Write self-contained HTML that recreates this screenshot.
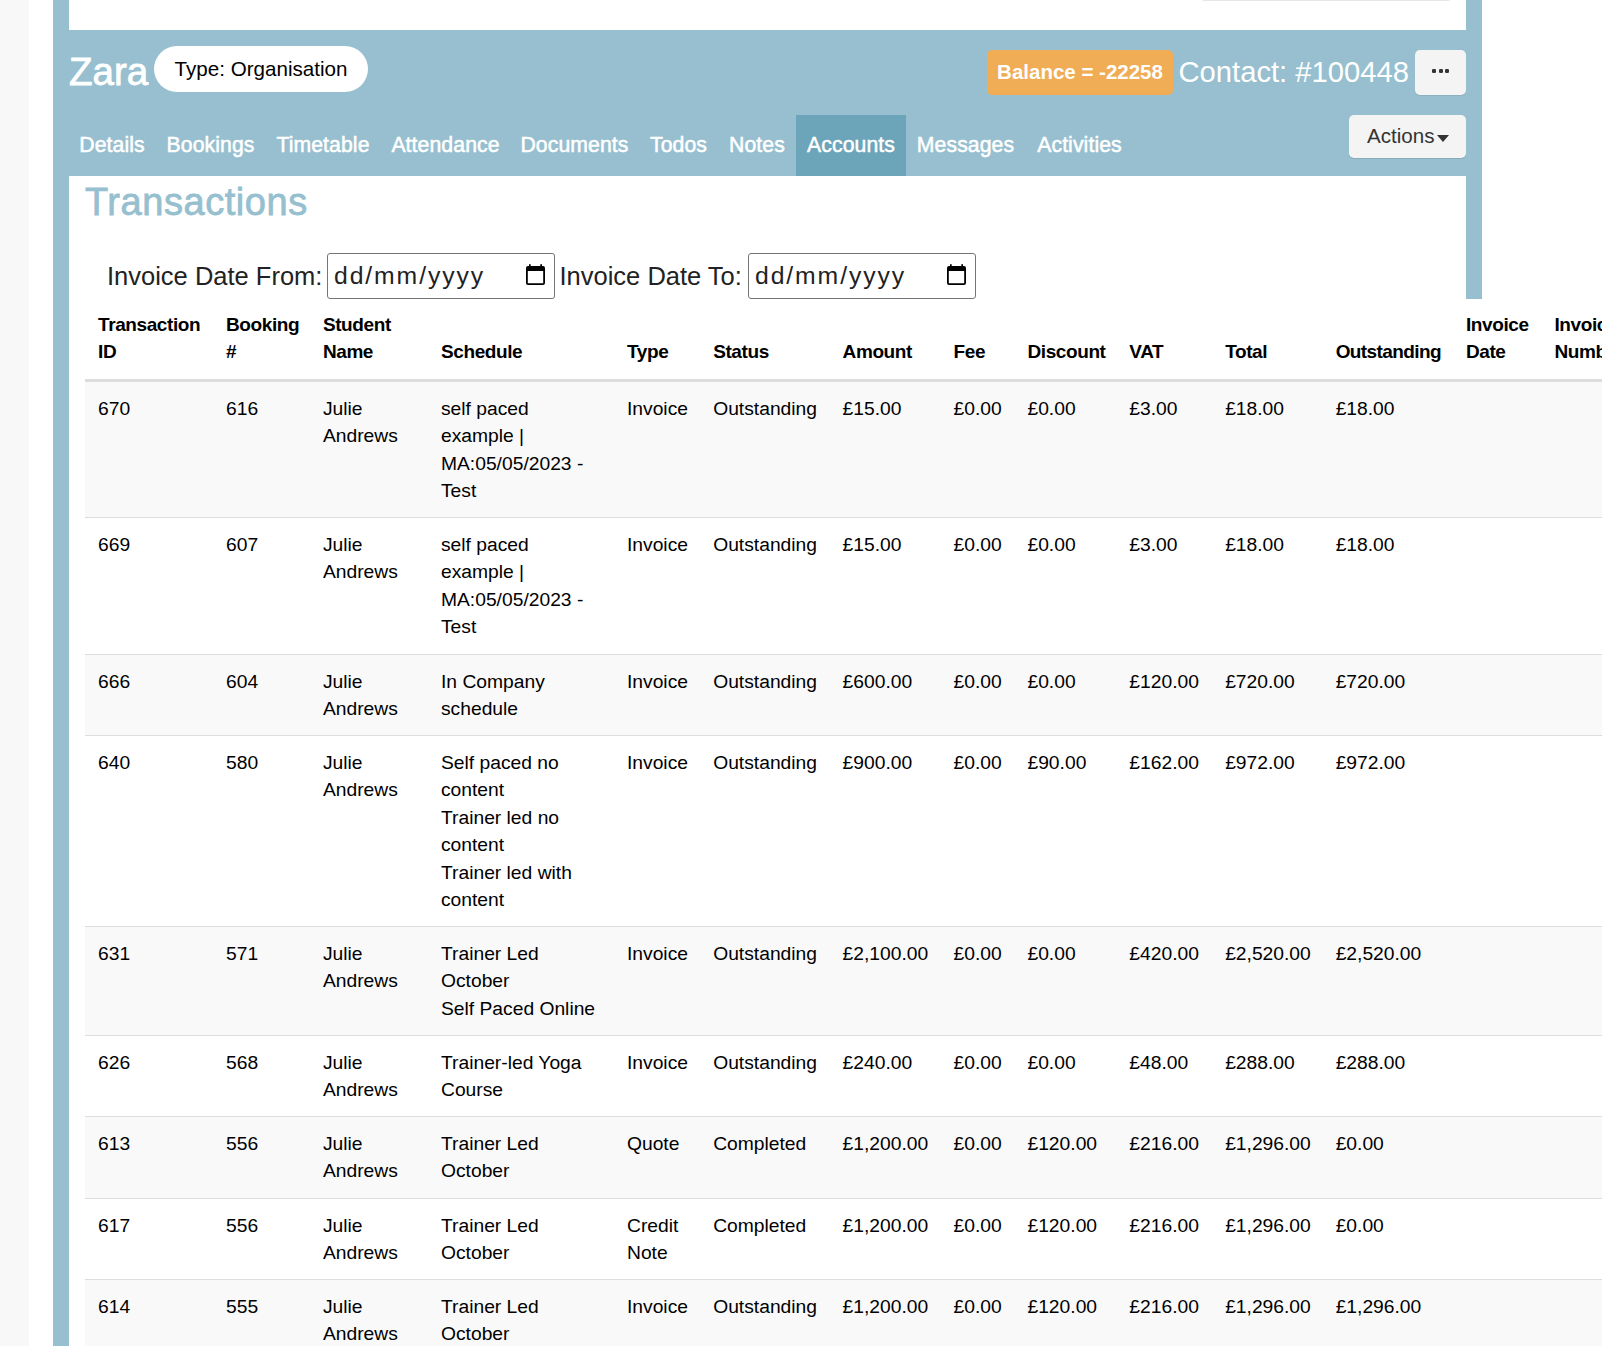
<!DOCTYPE html>
<html><head><meta charset="utf-8">
<style>
html,body{margin:0;padding:0;width:1602px;height:1346px;overflow:hidden;background:#fff;font-family:"Liberation Sans",sans-serif;}
.abs{position:absolute;}
#lg{left:0;top:0;width:29px;height:1346px;background:#f8f8f8;}
#bb{left:53px;top:0;width:1429px;height:1346px;background:#97bfcf;}
#tw{left:69px;top:0;width:1397px;height:30px;background:#fff;}
#topel{left:1200px;top:-20px;width:252px;height:21px;border:1px solid #e6e6e6;border-radius:4px;box-sizing:border-box;}
#zara{left:69px;top:49.5px;font-size:38.5px;line-height:44px;color:#fff;-webkit-text-stroke:0.8px #fff;}
#pill{left:154px;top:46px;width:214px;height:46px;border-radius:23px;background:#fff;color:#000;font-size:20.6px;line-height:46px;text-align:center;}
#badge{left:987px;top:50px;width:186px;height:45px;border-radius:5px;background:#f0ad55;color:#fff;font-weight:bold;font-size:20.5px;line-height:43px;text-align:center;}
#contact{left:1178.5px;top:51.5px;font-size:29.2px;line-height:40px;color:#fff;white-space:nowrap;}
#dots{left:1415px;top:50px;width:51px;height:45px;border-radius:5px;background:#f4f4f4;box-shadow:0 1px 0 rgba(0,0,0,0.08);}
#dots i{position:absolute;top:19px;width:4px;height:4px;background:#333;border-radius:1.3px;}
#nav{left:69px;top:115px;height:61px;}
.tab{position:absolute;top:0;height:61px;line-height:59px;color:#fff;font-size:21.2px;letter-spacing:0.1px;text-align:center;white-space:nowrap;-webkit-text-stroke:0.5px #fff;}
.tab.act{background:#6ca5b9;height:62px;}
#actions{left:1349px;top:115px;width:117px;height:43px;border-radius:5px;background:#f4f4f4;box-shadow:0 1px 0 rgba(0,0,0,0.10);color:#333;font-size:20.6px;line-height:43px;}
#content{left:69px;top:176px;width:1397px;height:1170px;background:#fff;}
#title{left:85px;top:179px;font-size:38px;letter-spacing:0.55px;line-height:46px;color:#96bfcf;white-space:nowrap;-webkit-text-stroke:0.8px #96bfcf;}
.lbl{top:258px;font-size:25.5px;line-height:36px;color:#222;white-space:nowrap;}
.inp{top:253px;width:228px;height:45.6px;border:1.4px solid #767676;border-radius:3px;z-index:2;box-sizing:border-box;background:#fff;}
.inp span{position:absolute;left:6px;top:5px;font-size:24.75px;line-height:34px;color:#222;letter-spacing:1.9px;}
.inp svg{position:absolute;left:197.6px;top:9.5px;}
table{position:absolute;left:85px;top:298px;border-collapse:collapse;table-layout:fixed;background:#fff;color:#000;}
th,td{padding:0 0 0 13px;text-align:left;vertical-align:top;white-space:nowrap;font-size:19.25px;line-height:27.5px;}
th{font-weight:bold;vertical-align:bottom;padding-bottom:13px;font-size:19px;letter-spacing:-0.4px;}
td{padding-top:13px;}
thead tr{height:82px;border-bottom:3px solid #ddd;}
tbody tr{border-top:1px solid #ddd;}
tbody tr:first-child{border-top:0;}
tbody tr.g{background:#f9f9f9;}
</style></head>
<body>
<div id="lg" class="abs"></div>
<div id="bb" class="abs"></div>
<div id="tw" class="abs"></div>
<div id="topel" class="abs"></div>
<div id="zara" class="abs">Zara</div>
<div id="pill" class="abs">Type: Organisation</div>
<div id="badge" class="abs">Balance = -22258</div>
<div id="contact" class="abs">Contact: #100448</div>
<div id="dots" class="abs"><i style="left:17px"></i><i style="left:23.5px"></i><i style="left:30px"></i></div>
<div id="nav" class="abs">
<div class="tab" style="left:0;width:86px">Details</div>
<div class="tab" style="left:87px;width:109px">Bookings</div>
<div class="tab" style="left:196px;width:116px">Timetable</div>
<div class="tab" style="left:312px;width:129px">Attendance</div>
<div class="tab" style="left:441px;width:129px">Documents</div>
<div class="tab" style="left:570px;width:79px">Todos</div>
<div class="tab" style="left:649px;width:78px">Notes</div>
<div class="tab act" style="left:727px;width:110px">Accounts</div>
<div class="tab" style="left:837px;width:119px">Messages</div>
<div class="tab" style="left:956px;width:109px">Activities</div>
</div>
<div id="actions" class="abs"><span style="position:absolute;left:18px;top:-1px">Actions</span><svg style="position:absolute;left:88px;top:20px" width="12" height="7" viewBox="0 0 12 7"><path d="M0 0H12L6 7Z" fill="#333"/></svg></div>
<div id="content" class="abs"></div>
<div class="abs" style="left:1466px;top:297px;width:16px;height:2px;background:#97bfcf;z-index:3"></div>
<div id="title" class="abs">Transactions</div>
<div class="abs lbl" style="left:107px">Invoice Date From:</div>
<div class="abs inp" style="left:327px"><span>dd/mm/yyyy</span><svg width="20" height="22" viewBox="0 0 20 22"><rect x="3" y="0" width="1.7" height="3.5" rx="0.8" fill="#000"/><rect x="14.3" y="0" width="1.7" height="3.5" rx="0.8" fill="#000"/><path d="M2 2H17A2 2 0 0 1 19 4V19A2 2 0 0 1 17 21H2A2 2 0 0 1 0 19V4A2 2 0 0 1 2 2ZM1.8 7V19.2H17.2V7Z" fill="#000" fill-rule="evenodd"/></svg></div>
<div class="abs lbl" style="left:559.5px">Invoice Date To:</div>
<div class="abs inp" style="left:748px"><span>dd/mm/yyyy</span><svg width="20" height="22" viewBox="0 0 20 22"><rect x="3" y="0" width="1.7" height="3.5" rx="0.8" fill="#000"/><rect x="14.3" y="0" width="1.7" height="3.5" rx="0.8" fill="#000"/><path d="M2 2H17A2 2 0 0 1 19 4V19A2 2 0 0 1 17 21H2A2 2 0 0 1 0 19V4A2 2 0 0 1 2 2ZM1.8 7V19.2H17.2V7Z" fill="#000" fill-rule="evenodd"/></svg></div>
<table style="width:1656.50px">
<colgroup><col style="width:128px"><col style="width:96.9px"><col style="width:118.1px"><col style="width:186px"><col style="width:86.2px"><col style="width:129.4px"><col style="width:111.0px"><col style="width:73.9px"><col style="width:101.9px"><col style="width:95.8px"><col style="width:110.5px"><col style="width:130.3px"><col style="width:88.5px"><col style="width:200.0px"></colgroup>
<thead><tr><th>Transaction<br>ID</th><th>Booking<br>#</th><th>Student<br>Name</th><th>Schedule</th><th>Type</th><th>Status</th><th>Amount</th><th>Fee</th><th>Discount</th><th>VAT</th><th>Total</th><th style="letter-spacing:-0.6px">Outstanding</th><th>Invoice<br>Date</th><th>Invoice<br>Number</th></tr></thead>
<tbody>
<tr class="g" style="height:137px"><td>670</td><td>616</td><td>Julie<br>Andrews</td><td>self paced<br>example |<br>MA:05/05/2023 -<br>Test</td><td>Invoice</td><td>Outstanding</td><td>£15.00</td><td>£0.00</td><td>£0.00</td><td>£3.00</td><td>£18.00</td><td>£18.00</td><td></td><td></td></tr>
<tr style="height:137px"><td>669</td><td>607</td><td>Julie<br>Andrews</td><td>self paced<br>example |<br>MA:05/05/2023 -<br>Test</td><td>Invoice</td><td>Outstanding</td><td>£15.00</td><td>£0.00</td><td>£0.00</td><td>£3.00</td><td>£18.00</td><td>£18.00</td><td></td><td></td></tr>
<tr class="g" style="height:81px"><td>666</td><td>604</td><td>Julie<br>Andrews</td><td>In Company<br>schedule</td><td>Invoice</td><td>Outstanding</td><td>£600.00</td><td>£0.00</td><td>£0.00</td><td>£120.00</td><td>£720.00</td><td>£720.00</td><td></td><td></td></tr>
<tr style="height:191px"><td>640</td><td>580</td><td>Julie<br>Andrews</td><td>Self paced no<br>content<br>Trainer led no<br>content<br>Trainer led with<br>content</td><td>Invoice</td><td>Outstanding</td><td>£900.00</td><td>£0.00</td><td>£90.00</td><td>£162.00</td><td>£972.00</td><td>£972.00</td><td></td><td></td></tr>
<tr class="g" style="height:109px"><td>631</td><td>571</td><td>Julie<br>Andrews</td><td>Trainer Led<br>October<br>Self Paced Online</td><td>Invoice</td><td>Outstanding</td><td>£2,100.00</td><td>£0.00</td><td>£0.00</td><td>£420.00</td><td>£2,520.00</td><td>£2,520.00</td><td></td><td></td></tr>
<tr style="height:81px"><td>626</td><td>568</td><td>Julie<br>Andrews</td><td>Trainer-led Yoga<br>Course</td><td>Invoice</td><td>Outstanding</td><td>£240.00</td><td>£0.00</td><td>£0.00</td><td>£48.00</td><td>£288.00</td><td>£288.00</td><td></td><td></td></tr>
<tr class="g" style="height:82px"><td>613</td><td>556</td><td>Julie<br>Andrews</td><td>Trainer Led<br>October</td><td>Quote</td><td>Completed</td><td>£1,200.00</td><td>£0.00</td><td>£120.00</td><td>£216.00</td><td>£1,296.00</td><td>£0.00</td><td></td><td></td></tr>
<tr style="height:81px"><td>617</td><td>556</td><td>Julie<br>Andrews</td><td>Trainer Led<br>October</td><td>Credit<br>Note</td><td>Completed</td><td>£1,200.00</td><td>£0.00</td><td>£120.00</td><td>£216.00</td><td>£1,296.00</td><td>£0.00</td><td></td><td></td></tr>
<tr class="g" style="height:81px"><td>614</td><td>555</td><td>Julie<br>Andrews</td><td>Trainer Led<br>October</td><td>Invoice</td><td>Outstanding</td><td>£1,200.00</td><td>£0.00</td><td>£120.00</td><td>£216.00</td><td>£1,296.00</td><td>£1,296.00</td><td></td><td></td></tr>
</tbody></table>
</body></html>
